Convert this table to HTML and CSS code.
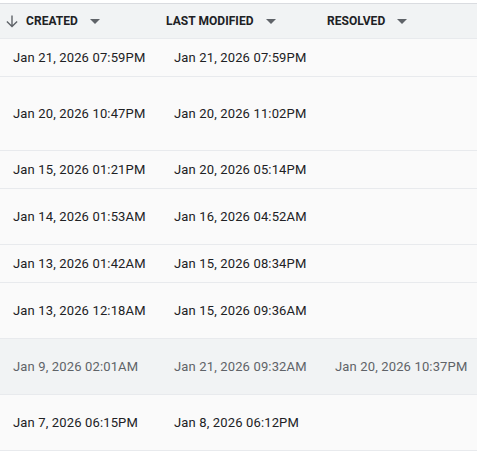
FILE: index.html
```html
<!DOCTYPE html>
<html>
<head>
<meta charset="utf-8">
<link rel="stylesheet" href="styles.css">
</head>
<body>
<div class="table">
  <div class="head">
    <div class="hcell c1">
      <svg class="sort" width="12" height="13" viewBox="0 0 12 13"><path d="M6 0.5v11M0.9 6.4L6 11.5l5.1-5.1" fill="none" stroke="#5f6368" stroke-width="1.4"/></svg>
      <span class="label">Created</span>
      <span class="tri"></span>
    </div>
    <div class="hcell c2"><span class="label">Last modified</span><span class="tri"></span></div>
    <div class="hcell c3"><span class="label">Resolved</span><span class="tri"></span></div>
  </div>
  <div class="row h38"><div class="cell">Jan 21, 2026 07:59PM</div><div class="cell">Jan 21, 2026 07:59PM</div><div class="cell"></div></div>
  <div class="row h74"><div class="cell">Jan 20, 2026 10:47PM</div><div class="cell">Jan 20, 2026 11:02PM</div><div class="cell"></div></div>
  <div class="row h38"><div class="cell">Jan 15, 2026 01:21PM</div><div class="cell">Jan 20, 2026 05:14PM</div><div class="cell"></div></div>
  <div class="row h56"><div class="cell">Jan 14, 2026 01:53AM</div><div class="cell">Jan 16, 2026 04:52AM</div><div class="cell"></div></div>
  <div class="row h38"><div class="cell">Jan 13, 2026 01:42AM</div><div class="cell">Jan 15, 2026 08:34PM</div><div class="cell"></div></div>
  <div class="row h56"><div class="cell">Jan 13, 2026 12:18AM</div><div class="cell">Jan 15, 2026 09:36AM</div><div class="cell"></div></div>
  <div class="row h56 muted"><div class="cell">Jan 9, 2026 02:01AM</div><div class="cell">Jan 21, 2026 09:32AM</div><div class="cell">Jan 20, 2026 10:37PM</div></div>
  <div class="row h56"><div class="cell">Jan 7, 2026 06:15PM</div><div class="cell">Jan 8, 2026 06:12PM</div><div class="cell"></div></div>
</div>
</body>
</html>
```

FILE: styles.css
```css
html, body {
  margin: 0;
  padding: 0;
  background: #ffffff;
}
body {
  padding-top: 3px;
  font-family: Roboto, "Liberation Sans", sans-serif;
  color: #202124;
}
.table {
  width: 477px;
  border-top: 1px solid #dadce0;
  background: #fafafa;
}
.head {
  display: flex;
  background: #f1f3f4;
  border-bottom: 1px solid #e8eaed;
  box-sizing: border-box;
  height: 35px;
}
.hcell {
  display: flex;
  align-items: center;
  font-size: 12px;
  font-weight: 700;
  text-transform: uppercase;
  letter-spacing: 0.05px;
  color: #202124;
  box-sizing: border-box;
}
.c1 { width: 161px; padding-left: 6px; }
.c2 { width: 161px; padding-left: 5px; }
.c3 { flex: 1; padding-left: 5px; }
.sort { margin-right: 8px; margin-top: 1px; }
.tri {
  width: 0;
  height: 0;
  border-left: 5px solid transparent;
  border-right: 5px solid transparent;
  border-top: 5px solid #5f6368;
  margin-left: 12px;
  margin-top: 1px;
}
.row {
  display: flex;
  align-items: center;
  border-bottom: 1px solid #e8eaed;
  box-sizing: border-box;
  font-size: 13px;
  letter-spacing: 0.15px;
}
.h38 { height: 38px; }
.h56 { height: 56px; }
.h74 { height: 74px; }
.cell {
  width: 161px;
  padding-left: 13px;
  box-sizing: border-box;
  white-space: nowrap;
}
.cell:last-child { flex: 1; width: auto; }
.muted {
  background: #f1f3f4;
  color: #5f6368;
}
```
